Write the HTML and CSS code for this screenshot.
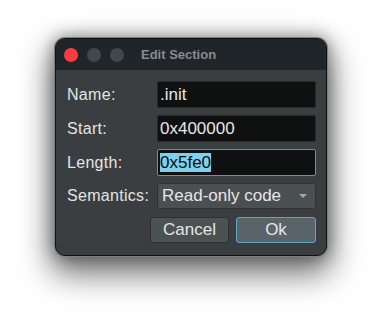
FILE: index.html
```html
<!DOCTYPE html>
<html lang="en">
<head>
  <meta charset="UTF-8">
  <title>Edit Section</title>
  <link rel="stylesheet" href="styles.css">
</head>
<body>

  <div class="window">
    <div class="titlebar">
      <div class="lights">
        <span class="light close"></span>
        <span class="light"></span>
        <span class="light"></span>
      </div>
      <div class="title">Edit Section</div>
    </div>

    <div class="content">
      <div class="form">
        <label>Name:</label>
        <div class="field">.init</div>
        <label>Start:</label>
        <div class="field">0x400000</div>
        <label>Length:</label>
        <div class="field focus"><span class="sel">0x5fe0</span></div>
        <label>Semantics:</label>
        <div class="combo">Read-only code<span class="arrow"></span></div>
      </div>
      <div class="buttons">
        <button class="btn">Cancel</button>
        <button class="btn default">Ok</button>
      </div>
    </div>
  </div>

</body>
</html>
```

FILE: styles.css
```css
html, body {
  height: 100%;
}
body {
  margin: 0;
  padding: 38px 0 0 55px;
  box-sizing: border-box;
  background: #fff;
  font-family: "Liberation Sans", Arial, sans-serif;
}
.window {
  width: 272px;
  height: 218px;
  box-sizing: border-box;
  border: 1px solid #101314;
  border-radius: 10px;
  overflow: hidden;
  background: #3a3e40;
  box-shadow: 0 0 0 1px #7d8081, 0 0 16px 2px rgba(0, 0, 0, 0.35), 0 14px 32px 4px rgba(0, 0, 0, 0.55);
}
.titlebar {
  height: 31px;
  background: #1f2528;
  display: flex;
  align-items: center;
  padding-left: 8px;
}
.lights {
  display: flex;
  gap: 9px;
}
.light {
  width: 14px;
  height: 14px;
  border-radius: 50%;
  background: #41484a;
}
.light.close {
  background: #fe3b42;
}
.title {
  margin-left: 17px;
  font-size: 13px;
  font-weight: bold;
  color: #878c8e;
}
.content {
  padding: 11px 10px 0 11px;
}
.form {
  display: grid;
  grid-template-columns: 90px 1fr;
  row-gap: 7px;
  align-items: center;
}
label {
  font-size: 16px;
  letter-spacing: 0.3px;
  color: #e4e4e4;
}
.field {
  height: 27px;
  box-sizing: border-box;
  background: #0f1111;
  border: 1px solid #262a2b;
  border-radius: 2px;
  padding: 0 2px;
  font-size: 17px;
  line-height: 25px;
  color: #e6e6e6;
}
.field.focus {
  border-color: #4f9cbd;
}
.sel {
  background: #80cfee;
  color: #0b0d0d;
}
.combo {
  position: relative;
  height: 26px;
  box-sizing: border-box;
  background: #4a4f51;
  border: 1px solid #2d3133;
  border-radius: 3px;
  padding: 0 4px;
  font-size: 17px;
  line-height: 24px;
  color: #e6e6e6;
}
.arrow {
  position: absolute;
  right: 8px;
  top: 10px;
  border-left: 4px solid transparent;
  border-right: 4px solid transparent;
  border-top: 4px solid #a3a7a8;
}
.buttons {
  display: flex;
  justify-content: flex-end;
  gap: 7px;
  margin-top: 8px;
}
.btn {
  height: 26px;
  width: 79px;
  background: #4c5153;
  border: 1px solid #2c3032;
  border-radius: 3px;
  font-family: inherit;
  font-size: 17px;
  color: #e6e6e6;
  padding: 0;
}
.btn.default {
  width: 80px;
  background: #59636a;
  border-color: #5aa6c6;
}
```
